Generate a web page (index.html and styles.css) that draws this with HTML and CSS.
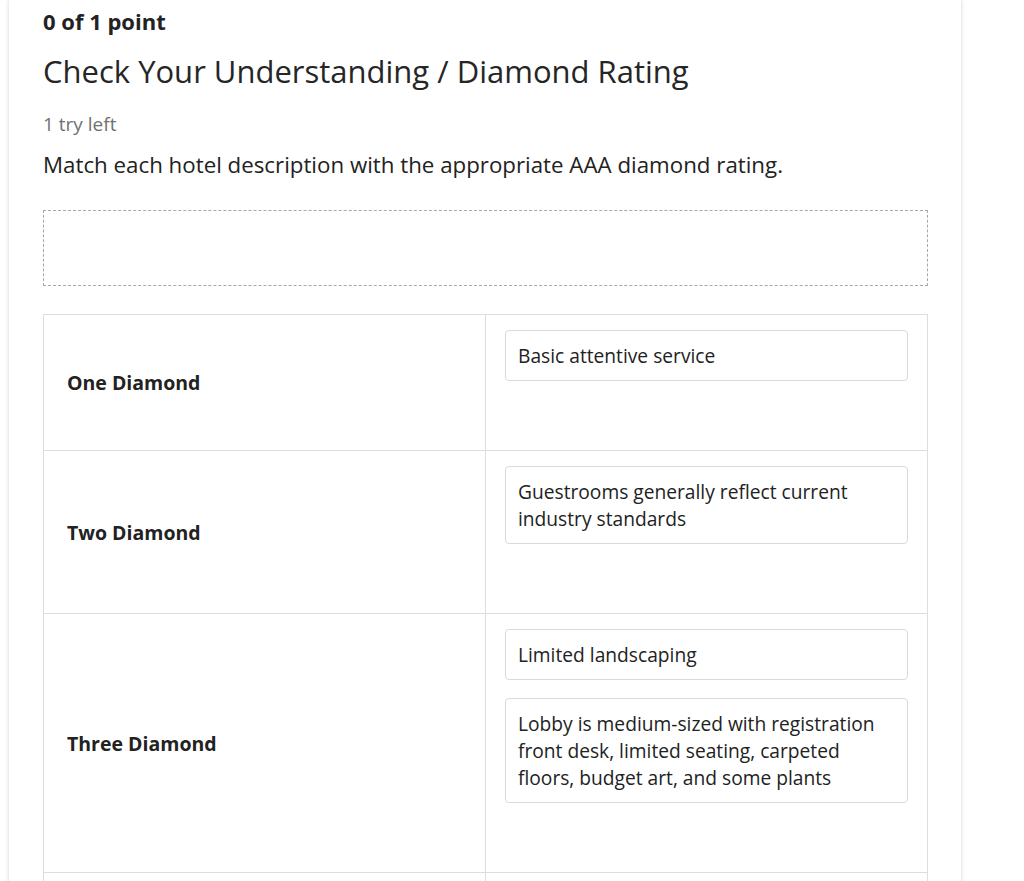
FILE: index.html
```html
<!DOCTYPE html>
<html>
<head>
<meta charset="utf-8">
<link rel="stylesheet" href="styles.css">
</head>
<body>
<div class="card">
  <div class="points">0 of 1 point</div>
  <h1 class="title">Check Your Understanding / Diamond Rating</h1>
  <div class="tries">1 try left</div>
  <p class="prompt">Match each hotel description with the appropriate AAA diamond rating.</p>
  <div class="pool"></div>
  <table class="match">
    <colgroup><col class="c1"><col class="c2"></colgroup>
    <tr>
      <td class="label">One Diamond</td>
      <td class="drop">
        <div class="item">Basic attentive service</div>
      </td>
    </tr>
    <tr>
      <td class="label">Two Diamond</td>
      <td class="drop">
        <div class="item">Guestrooms generally reflect current industry standards</div>
      </td>
    </tr>
    <tr>
      <td class="label">Three Diamond</td>
      <td class="drop">
        <div class="item">Limited landscaping</div>
        <div class="item">Lobby is medium-sized with registration front desk, limited seating, carpeted floors, budget art, and some plants</div>
      </td>
    </tr>
    <tr class="empty">
      <td class="label"></td>
      <td class="drop"></td>
    </tr>
  </table>
</div>
</body>
</html>
```
FILE: styles.css
```css
html, body {
  margin: 0;
  padding: 0;
  background: #ffffff;
}
body {
  font-family: "Open Sans", "Liberation Sans", sans-serif;
  color: #222222;
  height: 881px;
  overflow: hidden;
}
.card {
  margin-left: 9px;
  width: 952px;
  box-sizing: border-box;
  padding: 6px 33px 40px 34px;
  background: #fff;
  box-shadow: 0 0 4px rgba(0, 0, 0, 0.18);
  min-height: 1200px;
}
.points {
  font-size: 22px;
  font-weight: 700;
  line-height: 30px;
}
.title {
  font-size: 31px;
  font-weight: 400;
  line-height: 40px;
  margin: 15px 0 0 0;
  color: #262626;
}
.tries {
  font-size: 19px;
  color: #717171;
  line-height: 26px;
  margin-top: 20px;
}
.prompt {
  font-size: 22.3px;
  line-height: 30px;
  margin: 13px 0 0 0;
}
.pool {
  margin-top: 30px;
  height: 74px;
  border: 1px dashed #a8a8a8;
}
.match {
  margin-top: 28px;
  width: 885px;
  border-collapse: collapse;
  table-layout: fixed;
}
.c1, .c2 {
  width: 50%;
}
.match td {
  border: 1px solid #dddddd;
  vertical-align: middle;
}
.label {
  padding: 0 0 0 23px;
  font-size: 19.5px;
  font-weight: 700;
}
.drop {
  padding: 15px 19px 69px 19px;
}
.empty td {
  height: 120px;
}
.item {
  border: 1px solid #dadada;
  border-radius: 4px;
  padding: 11px 12px;
  font-size: 19.2px;
  line-height: 27px;
}
.item + .item {
  margin-top: 18px;
}
```
